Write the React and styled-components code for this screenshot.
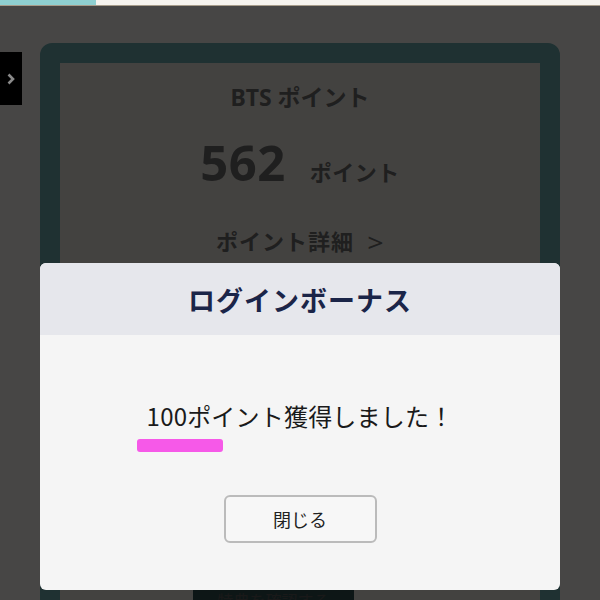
import React from "react";
import styled, { createGlobalStyle } from "styled-components";

const GlobalStyle = createGlobalStyle`
  html, body {
    margin: 0;
    padding: 0;
    width: 600px;
    height: 600px;
    overflow: hidden;
    background: #efece8;
    font-family: "Noto Sans", "Noto Sans CJK JP", sans-serif;
  }
`;

const Page = styled.div`
  position: relative;
  width: 600px;
  height: 600px;
  overflow: hidden;
  background: #efece8;
`;

const TopBar = styled.div`
  display: flex;
  height: 5px;
  border-bottom: 1px solid #a79c8a;
`;

const TopTab = styled.div`
  width: ${(props) => props.w}px;
  flex: ${(props) => (props.w ? "none" : 1)};
  background: ${(props) => props.color};
`;

const Main = styled.div`
  padding: 37px 40px 0;
`;

const Card = styled.div`
  border: 20px solid #68a5a9;
  border-radius: 12px;
  background: #e1ddd7;
  height: 560px;
  display: flex;
  flex-direction: column;
  align-items: center;
  padding-top: 17px;
  color: #6a6a6a;
`;

const CardTitle = styled.div`
  font-size: 23px;
  font-weight: 700;
  line-height: 34px;
`;

const PointRow = styled.div`
  display: flex;
  align-items: baseline;
  gap: 24px;
  margin-top: 18px;
`;

const PointNumber = styled.span`
  font-size: 49px;
  font-weight: 700;
  line-height: 60px;
  letter-spacing: 0.5px;
`;

const PointUnit = styled.span`
  font-size: 22px;
  font-weight: 700;
  letter-spacing: 0.5px;
`;

const DetailLink = styled.div`
  display: flex;
  align-items: center;
  gap: 14px;
  margin-top: 28px;
  font-size: 22px;
  font-weight: 700;
  letter-spacing: 1px;
`;

const Arrow = styled.span`
  font-size: 26px;
  font-weight: 400;
  transform: scaleX(1.1);
  margin-top: 4px;
`;

const BottomButton = styled.div`
  position: absolute;
  left: 193px;
  top: 586px;
  width: 161px;
  height: 40px;
  background: #2d4b4b;
  color: #555;
  font-size: 16px;
  text-align: center;
  line-height: 30px;
`;

const SideTab = styled.div`
  position: absolute;
  left: 0;
  top: 52px;
  width: 22px;
  height: 53px;
  background: #000;
  display: flex;
  align-items: center;
  justify-content: center;
  z-index: 3;
`;

const Overlay = styled.div`
  position: absolute;
  left: 0;
  right: 0;
  top: 6px;
  bottom: 0;
  background: rgba(0, 0, 0, 0.7);
  z-index: 2;
`;

const Modal = styled.div`
  position: absolute;
  left: 40px;
  top: 263px;
  width: 520px;
  height: 327px;
  border-radius: 6px;
  overflow: hidden;
  background: #f5f5f5;
  display: flex;
  flex-direction: column;
  z-index: 4;
`;

const ModalHeader = styled.div`
  height: 72px;
  background: #e6e7ec;
  display: flex;
  align-items: center;
  justify-content: center;
  font-family: "Noto Sans CJK JP", sans-serif;
  font-size: 27px;
  font-weight: 700;
  color: #1b2548;
  letter-spacing: 1px;
`;

const ModalBody = styled.div`
  flex: 1;
  display: flex;
  flex-direction: column;
  align-items: center;
  padding-top: 63px;
`;

const MessageWrap = styled.div`
  display: flex;
  flex-direction: column;
  align-items: flex-start;
`;

const Message = styled.div`
  font-family: "Noto Sans CJK JP", sans-serif;
  font-size: 24px;
  line-height: 36px;
  color: #1a1a1a;
  letter-spacing: 0.2px;
`;

const Marker = styled.div`
  width: 86px;
  height: 13px;
  margin: 5px 0 0 -10px;
  border-radius: 3px;
  background: #f659e8;
`;

const CloseButton = styled.button`
  margin-top: 43px;
  width: 153px;
  height: 48px;
  border: 2px solid #bbbbbb;
  border-radius: 6px;
  background: #f7f7f7;
  font-family: "Noto Sans CJK JP", sans-serif;
  font-size: 18px;
  color: #222;
  cursor: pointer;
`;

const Chevron = () => (
  <svg width="10" height="14" viewBox="0 0 10 14">
    <path d="M2.5 2.5 L7 7 L2.5 11.5" fill="none" stroke="#8a8a8a" strokeWidth="2.6" />
  </svg>
);

const App = () => (
  <Page>
    <GlobalStyle />
    <TopBar>
      <TopTab w={96} color="#8fd0d1" />
      <TopTab color="#f6f3ee" />
    </TopBar>
    <Main>
      <Card>
        <CardTitle>BTS ポイント</CardTitle>
        <PointRow>
          <PointNumber>562</PointNumber>
          <PointUnit>ポイント</PointUnit>
        </PointRow>
        <DetailLink>
          <span>ポイント詳細</span>
          <Arrow>&gt;</Arrow>
        </DetailLink>
      </Card>
    </Main>
    <BottomButton>特典を確認する</BottomButton>
    <Overlay />
    <SideTab>
      <Chevron />
    </SideTab>
    <Modal>
      <ModalHeader>ログインボーナス</ModalHeader>
      <ModalBody>
        <MessageWrap>
          <Message>100ポイント獲得しました！</Message>
          <Marker />
        </MessageWrap>
        <CloseButton>閉じる</CloseButton>
      </ModalBody>
    </Modal>
  </Page>
);

export default App;
